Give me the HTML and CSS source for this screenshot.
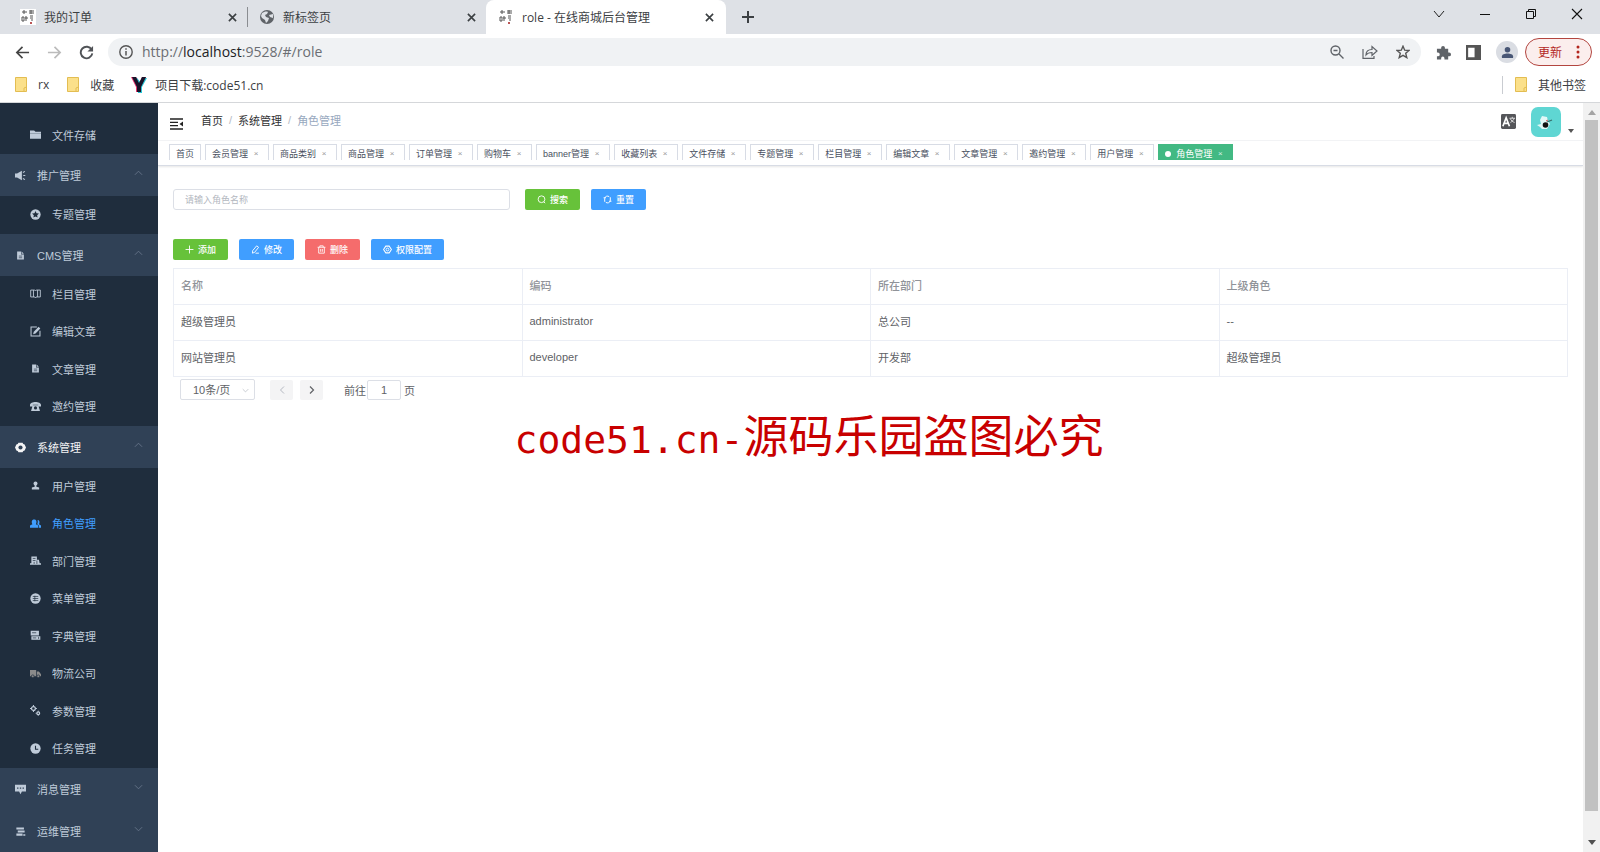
FILE: index.html
```html
<!DOCTYPE html>
<html lang="zh-CN">
<head>
<meta charset="utf-8">
<title>role - 在线商城后台管理</title>
<link rel="stylesheet" href="styles.css">
</head>
<body>
<svg class="sprite" aria-hidden="true">
  <symbol id="close" viewBox="0 0 10 10"><path d="M1 1l8 8M9 1L1 9" fill="none" stroke="currentColor" stroke-width="1.8"/></symbol>
  <symbol id="seal" viewBox="0 0 16 16"><path d="M2 3h5M4 1v4M9 2h5M11 1v4M9 4h5M2 8h2v4H2zM5 9h3M6 7v5M10 7h3M10 9h3M11 11h2" fill="none" stroke="#555" stroke-width="1"/><path d="M10 13h2v2h-2z" fill="#b55"/></symbol>
  <symbol id="bfolder" viewBox="0 0 12 15"><path d="M.5.5h11v14H.5z" fill="#fbe08a" stroke="#e3bd52"/><path d="M9 14v-3l2.5-1" fill="none" stroke="#e3bd52"/></symbol>
  <symbol id="up" viewBox="0 0 10 6"><path d="M1 5l4-4 4 4" fill="none" stroke="currentColor"/></symbol>
  <symbol id="down" viewBox="0 0 10 6"><path d="M1 1l4 4 4-4" fill="none" stroke="currentColor"/></symbol>
  <symbol id="file" viewBox="0 0 16 16"><path d="M2 1h7v5h5v9H2z" fill="currentColor"/><path d="M10 1l4 4h-4z" fill="currentColor"/><path d="M5 9h6M5 12h6" stroke="#2b3a4d" stroke-width="1.2"/></symbol>
</svg>

<header class="browser">
  <div class="tabstrip">
    <div class="btab"><svg class="fav seal"><use href="#seal"/></svg><span class="btitle">我的订单</span><button class="bclose" aria-label="关闭"><svg><use href="#close"/></svg></button></div>
    <div class="btab divided"><svg class="fav" viewBox="0 0 16 16"><circle cx="8" cy="8" r="7" fill="#5f6368"/><path d="M3 4c2-1 4-2 6-1l-1 2-2 1 1 2 3 1-1 3-2 2-1-3-3-2-1-2zM10 6l4-1v4l-3-1z" fill="#dee1e6"/></svg><span class="btitle">新标签页</span><button class="bclose" aria-label="关闭"><svg><use href="#close"/></svg></button></div>
    <div class="btab current"><svg class="fav"><use href="#seal"/></svg><span class="btitle">role - 在线商城后台管理</span><button class="bclose" aria-label="关闭"><svg><use href="#close"/></svg></button></div>
    <button class="newtab" aria-label="新标签页"><svg viewBox="0 0 12 12"><path d="M6 0v12M0 6h12" stroke="#3c4043" stroke-width="2"/></svg></button>
    <div class="wincontrols">
      <button aria-label="标签页"><svg viewBox="0 0 12 12"><path d="M1 3l5 6 5-6" fill="none" stroke="#222"/></svg></button>
      <button aria-label="最小化"><svg viewBox="0 0 12 12"><path d="M1 6.500h10" stroke="#111"/></svg></button>
      <button aria-label="还原"><svg viewBox="0 0 12 12"><path d="M1.500 3.500h7v7h-7zM3.500 3v-1.500h7v7H9" fill="none" stroke="#111"/></svg></button>
      <button aria-label="关闭窗口"><svg viewBox="0 0 12 12"><path d="M1 1l10 10M11 1L1 11" stroke="#111" stroke-width="1.100"/></svg></button>
    </div>
  </div>
  <div class="toolbar">
    <button class="nav" aria-label="后退"><svg viewBox="0 0 16 16"><path d="M15 8H2M8 2L2 8l6 6" fill="none" stroke="#444" stroke-width="1.800"/></svg></button>
    <button class="nav" aria-label="前进"><svg viewBox="0 0 16 16"><path d="M1 8h13M8 2l6 6-6 6" fill="none" stroke="#bbb" stroke-width="1.800"/></svg></button>
    <button class="nav" aria-label="刷新"><svg viewBox="0 0 16 16"><path d="M13.500 5A6.200 6.200 0 1 0 14.200 9" fill="none" stroke="#505357" stroke-width="2"/><path d="M15 1v6H9z" fill="#505357"/></svg></button>
    <div class="omnibox">
      <svg class="ic14" viewBox="0 0 14 14"><circle cx="7" cy="7" r="6.200" fill="none" stroke="#555" stroke-width="1.400"/><path d="M7 6v4.500M7 3.200v1.600" stroke="#555" stroke-width="1.500"/></svg>
      <span class="url">http://<b>localhost</b>:9528/#/role</span>
      <button aria-label="缩放"><svg viewBox="0 0 14 14"><circle cx="5.500" cy="5.500" r="4.500" fill="none" stroke="#5f6368" stroke-width="1.400"/><path d="M9 9l4.500 4.500M3.500 5.500h4" stroke="#5f6368" stroke-width="1.400"/></svg></button>
      <button aria-label="分享"><svg viewBox="0 0 16 14"><path d="M1 4v9.300h11V11M4 10c0-4 2.500-5.500 6-5.500V1.500L15 6l-5 4.500V7.500C7.500 7.500 5.500 8 4 10z" fill="none" stroke="#5f6368" stroke-width="1.200"/></svg></button>
      <button aria-label="收藏"><svg viewBox="0 0 14 14"><path d="M7 1.200l1.700 4 4.300.3-3.300 2.800 1.100 4.300L7 10.300l-3.800 2.300 1.100-4.300L1 5.500l4.300-.3z" fill="none" stroke="#555" stroke-width="1.400"/></svg></button>
    </div>
    <div class="tools">
      <button aria-label="扩展"><svg viewBox="0 0 16 16"><path d="M1 4h4.500V3a2 2 0 0 1 4 0v1H13v4h1a2 2 0 0 1 0 4h-1v3.500H9V14a1.700 1.700 0 0 0-3.500 0v1.500H1V12h1a2 2 0 0 0 0-4H1z" fill="#5f6368"/></svg></button>
      <button aria-label="侧边栏"><svg viewBox="0 0 14 14"><path d="M0 0h14v14H0zM2 2.500v9h6v-9z" fill="#555" fill-rule="evenodd"/></svg></button>
      <button class="profile" aria-label="用户"><svg viewBox="0 0 14 14"><circle cx="7" cy="4" r="3" fill="#485675"/><path d="M1 13v-2c0-2 3-3 6-3s6 1 6 3v2z" fill="#485675"/></svg></button>
    </div>
    <button class="update">更新<svg viewBox="0 0 4 14"><g fill="#b3261e"><circle cx="2" cy="2" r="1.500"/><circle cx="2" cy="7" r="1.500"/><circle cx="2" cy="12" r="1.500"/></g></svg></button>
  </div>
  <nav class="bookmarks">
    <a href="#"><svg class="bf"><use href="#bfolder"/></svg>rx</a>
    <a href="#"><svg class="bf"><use href="#bfolder"/></svg>收藏</a>
    <a class="site" href="#"><svg viewBox="0 0 16 16"><path d="M0 0h5l4 5 2-5h4l-5 10v5H5v-5z" fill="#e6366f"/><path d="M2 1h4l4 5 2-5h4l-5 9v6H7v-6z" fill="#28c8d8"/><path d="M1 0h4l3 6 3-6h4l-5 10v5H6v-5z" fill="#181329"/></svg>项目下载:code51.cn</a>
    <a class="others" href="#"><svg class="bf"><use href="#bfolder"/></svg>其他书签</a>
  </nav>
</header>

<div class="app">
  <aside class="sidebar">
    <ul class="sub cut">
      <li><a href="#"><svg viewBox="0 0 16 16"><path d="M0 2h6l2 2h8v2H0zM0 6.500h16V14H0z" fill="currentColor"/></svg>文件存储</a></li>
    </ul>
    <button class="group"><svg viewBox="0 0 16 16"><path d="M0 5h3l7-4v14l-7-4H0z" fill="currentColor"/><path d="M11.500 3.500l3-1.500M12 8h3M11.500 12.500l3 1.500" stroke="currentColor" stroke-width="1.600"/></svg><span>推广管理</span><svg class="arrow"><use href="#up"/></svg></button>
    <ul class="sub single">
      <li><a href="#"><svg viewBox="0 0 16 16"><circle cx="8" cy="8" r="7.500" fill="currentColor"/><path d="M8 3l1.500 3.200 3.500.4-2.600 2.400.7 3.500L8 10.800l-3.100 1.700.7-3.500L3 6.600l3.500-.4z" fill="#1f2d3d"/></svg>专题管理</a></li>
    </ul>
    <button class="group"><svg class="small"><use href="#file"/></svg><span>CMS管理</span><svg class="arrow"><use href="#up"/></svg></button>
    <ul class="sub">
      <li><a href="#"><svg viewBox="0 0 16 16"><path d="M1 3h6l1 1 1-1h6v10H9l-1 1.500L7 13H1zM5 3v10M11 3v10" fill="none" stroke="currentColor" stroke-width="1.300"/></svg>栏目管理</a></li>
      <li><a href="#"><svg viewBox="0 0 16 16"><path d="M10 1.500H1.500v13h13V7" fill="none" stroke="currentColor" stroke-width="1.500"/><path d="M12.500 1L15 3.500 8 11l-3.500 1L5.500 8.500z" fill="currentColor"/></svg>编辑文章</a></li>
      <li><a href="#"><svg class="small"><use href="#file"/></svg>文章管理</a></li>
      <li><a href="#"><svg viewBox="0 0 16 16"><path d="M0 6c0-6 16-6 16 0v2h-4V5.500H4V8H0zM4 6h8l2.500 8.500h-13z" fill="currentColor"/><circle cx="8" cy="10" r="2.300" fill="#1f2d3d"/></svg>邀约管理</a></li>
    </ul>
    <button class="group opened"><svg viewBox="0 0 16 16"><path d="M5 1h6l1 2 2 .5L16 8l-2 4.500-2 .5-1 2H5l-1-2-2-.5L0 8l2-4.500L4 3z" fill="currentColor"/><circle cx="8" cy="8" r="3" fill="#304156"/></svg><span>系统管理</span><svg class="arrow"><use href="#up"/></svg></button>
    <ul class="sub">
      <li><a href="#"><svg class="small" viewBox="0 0 16 16"><circle cx="8" cy="4.500" r="3.500" fill="currentColor"/><path d="M6.500 7h3v3l5 1.500V15h-13v-3.500l5-1.500z" fill="currentColor"/></svg>用户管理</a></li>
      <li><a class="active" href="#"><svg viewBox="0 0 16 16"><path d="M6 2c4 0 4 4 2.500 7L12 11v3H0v-3l3.500-2C2 6 2 2 6 2zM11 3c3 0 3.500 4 2 6l3 2v3h-3v-3l-2.500-2c1-2 1-4 .5-6z" fill="currentColor"/></svg>角色管理</a></li>
      <li><a href="#"><svg viewBox="0 0 16 16"><path d="M2 2h8v5h3l1 5h2v2H0v-2h2z" fill="currentColor"/><path d="M4 5h4M4 8h4M10 8v5M6 10v3" stroke="#1f2d3d"/></svg>部门管理</a></li>
      <li><a href="#"><svg viewBox="0 0 16 16"><circle cx="8" cy="8" r="7.500" fill="currentColor"/><path d="M4 5h8M4 8h8M4 11h8M7 4v8" stroke="#1f2d3d"/></svg>菜单管理</a></li>
      <li><a href="#"><svg viewBox="0 0 16 16"><path d="M1 1h12v7H1zM2 9h8v5H2zM10 9h5v5h-5z" fill="currentColor"/><path d="M3 4h6M4 11.500h5M12.500 10v3" stroke="#1f2d3d"/></svg>字典管理</a></li>
      <li><a href="#"><svg class="gray" viewBox="0 0 16 16"><path d="M0 3h9v9H0zM10 5h3l3 4v3h-6z" fill="currentColor"/><circle cx="4" cy="12" r="2" fill="currentColor" stroke="#1f2d3d"/><circle cx="12" cy="12" r="2" fill="currentColor" stroke="#1f2d3d"/></svg>物流公司</a></li>
      <li><a href="#"><svg viewBox="0 0 16 16"><circle cx="5" cy="5" r="2.800" fill="none" stroke="currentColor" stroke-width="1.800"/><path d="M5 0v2M5 8v2M0 5h2M8 5h2" stroke="currentColor" stroke-width="1.500"/><circle cx="12" cy="12" r="2" fill="none" stroke="currentColor" stroke-width="1.800"/><path d="M12 8v2M12 14v2M8 12h2" stroke="currentColor"/></svg>参数管理</a></li>
      <li><a href="#"><svg viewBox="0 0 16 16"><circle cx="8" cy="8" r="7.500" fill="currentColor"/><path d="M8 4v5h4" fill="none" stroke="#1f2d3d" stroke-width="1.600"/></svg>任务管理</a></li>
    </ul>
    <button class="group"><svg viewBox="0 0 16 16"><path d="M0 1h16v10h-6l-2 4-2-4H0z" fill="currentColor"/><path d="M3 6h2M7 6h2M11 6h2" stroke="#304156" stroke-width="2"/></svg><span>消息管理</span><svg class="arrow"><use href="#down"/></svg></button>
    <button class="group"><svg viewBox="0 0 16 16"><path d="M2 2h11v3H2zM4 6.500h10v3H4zM2 11h9v3H2zM12 12h3v2h-3z" fill="currentColor"/></svg><span>运维管理</span><svg class="arrow"><use href="#down"/></svg></button>
  </aside>

  <main class="main">
    <div class="navbar">
      <button class="fold" aria-label="折叠菜单"><svg viewBox="0 0 13 12"><path d="M0 1h13M0 4.300h8M0 7.700h8M0 11h13" stroke="#222" stroke-width="1.300"/><path d="M13 3.500v5L9.500 6z" fill="#222"/></svg></button>
      <nav class="crumbs"><a href="#">首页</a><i>/</i><a href="#">系统管理</a><i>/</i><span>角色管理</span></nav>
      <button class="lang" aria-label="语言"><svg viewBox="0 0 16 16"><rect width="16" height="16" rx="1.500" fill="#55565a"/><path d="M2 13L5.500 4 9 13M3.200 10h4.600" fill="none" stroke="#fff" stroke-width="1.800"/><path d="M9 4.500h6M12 3v1.500M10 9c2-1 3.500-2.500 4-4.500M10 5c.8 2 2.500 3.500 4.500 4" fill="none" stroke="#fff" stroke-width=".8"/></svg></button>
      <button class="user" aria-label="用户菜单"><svg class="avatar" viewBox="0 0 30 30"><rect width="30" height="30" rx="7" fill="#5fd6d3"/><path d="M11 9l5 1 1 4 2 3-3 5-5 0-2-2-3-2 4-1-1-4z" fill="#e2f8f7"/><path d="M16 15l5-2" stroke="#37706e" stroke-width="1.300"/><circle cx="14.500" cy="18" r="2.800" fill="#111"/><path d="M15 14l2-1" stroke="#c55"/></svg><svg class="caret" viewBox="0 0 6 4"><path d="M0 0h6L3 4z" fill="#555"/></svg></button>
    </div>
    <div class="tags">
      <div class="tagclip">
        <a href="#">首页</a>
        <a href="#">会员管理<i>×</i></a>
        <a href="#">商品类别<i>×</i></a>
        <a href="#">商品管理<i>×</i></a>
        <a href="#">订单管理<i>×</i></a>
        <a href="#">购物车<i>×</i></a>
        <a href="#">banner管理<i>×</i></a>
        <a href="#">收藏列表<i>×</i></a>
        <a href="#">文件存储<i>×</i></a>
        <a href="#">专题管理<i>×</i></a>
        <a href="#">栏目管理<i>×</i></a>
        <a href="#">编辑文章<i>×</i></a>
        <a href="#">文章管理<i>×</i></a>
        <a href="#">邀约管理<i>×</i></a>
        <a href="#">用户管理<i>×</i></a>
        <a class="on" href="#">角色管理<i>×</i></a>
      </div>
    </div>
    <section class="content">
      <form class="filters">
        <input class="search" type="text" placeholder="请输入角色名称" aria-label="角色名称">
        <button type="button" class="btn green"><svg viewBox="0 0 16 16"><circle cx="8" cy="7.500" r="6" fill="none" stroke="currentColor" stroke-width="1.600"/><path d="M12 12l2.500 2.500" stroke="currentColor" stroke-width="1.600"/></svg>搜索</button>
        <button type="button" class="btn blue"><svg viewBox="0 0 16 16"><path d="M3 12V6a5 5 0 0 1 8-3M1 5h4M13 4v6a5 5 0 0 1-8 3M15 11h-4" fill="none" stroke="currentColor" stroke-width="1.700"/></svg>重置</button>
      </form>
      <div class="actions">
        <button class="btn green"><svg viewBox="0 0 16 16"><path d="M8 1v14M1 8h14" stroke="currentColor" stroke-width="1.600"/></svg>添加</button>
        <button class="btn blue"><svg viewBox="0 0 16 16"><path d="M10 1.500l3.500 2.500-7 9-4 1.500.5-4.500zM8 14.500h6" fill="none" stroke="currentColor" stroke-width="1.600"/></svg>修改</button>
        <button class="btn red"><svg viewBox="0 0 16 16"><path d="M1 4h14M5 4V1.500h6V4M3 4v10.500h10V4M6.500 7v5M9.500 7v5" fill="none" stroke="currentColor" stroke-width="1.500"/></svg>删除</button>
        <button class="btn blue"><svg viewBox="0 0 16 16"><path d="M5 2h6l4 6-4 6H5L1 8z" fill="none" stroke="currentColor" stroke-width="1.800"/><circle cx="8" cy="8" r="2.500" fill="none" stroke="currentColor" stroke-width="1.600"/></svg>权限配置</button>
      </div>
      <table class="grid">
        <thead><tr><th>名称</th><th>编码</th><th>所在部门</th><th>上级角色</th></tr></thead>
        <tbody>
          <tr><td>超级管理员</td><td>administrator</td><td>总公司</td><td>--</td></tr>
          <tr><td>网站管理员</td><td>developer</td><td>开发部</td><td>超级管理员</td></tr>
        </tbody>
      </table>
      <div class="pager">
        <div class="sizes"><select aria-label="每页条数"><option>10条/页</option></select><svg><use href="#down"/></svg></div>
        <button class="page" aria-label="上一页" disabled><svg viewBox="0 0 6 8"><path d="M5 0.500L1.500 4 5 7.500" fill="none" stroke="currentColor"/></svg></button>
        <button class="page" aria-label="下一页"><svg viewBox="0 0 6 8"><path d="M1 0.500L4.500 4 1 7.500" fill="none" stroke="currentColor" stroke-width="1.200"/></svg></button>
        <label class="jump">前往<input type="text" value="1">页</label>
      </div>
    </section>
  </main>

  <div class="scrollbar" aria-hidden="true">
    <svg viewBox="0 0 8 5"><path d="M0 5h8L4 0z" fill="#a3a3a3"/></svg>
    <div class="thumb"></div>
    <svg viewBox="0 0 8 5"><path d="M0 0h8L4 5z" fill="#505050"/></svg>
  </div>
</div>
<div class="watermark"><span>code51.cn-</span>源码乐园盗图必究</div>
</body>
</html>
```

FILE: styles.css
```css
* { box-sizing: border-box; }
body {
  margin: 0;
  height: 100vh;
  display: flex;
  flex-direction: column;
  overflow: hidden;
  position: relative;
  background: #fff;
  font-family: "Liberation Sans", "Noto Sans CJK SC", sans-serif;
  font-size: 11px;
  color: #606266;
}
button { border: 0; background: none; padding: 0; font: inherit; color: inherit; display: flex; align-items: center; }
input, select { font: inherit; color: inherit; }
a { color: inherit; text-decoration: none; }
svg { display: block; flex: none; }
i { font-style: normal; }
.sprite { position: absolute; width: 0; height: 0; }

/* browser frame */
.browser {
  flex: none;
  font-family: "Open Sans", "Noto Sans CJK SC", sans-serif;
  font-size: 12px;
  color: #3c4043;
  border-bottom: 1px solid #d5d7da;
}
.tabstrip { display: flex; height: 34px; background: #dee1e6; }
.btab { display: flex; align-items: center; width: 239px; padding: 0 10px 0 20px; gap: 8px; }
.btab:first-child { width: 247px; }
.btab.divided { background: linear-gradient(#8a8d91, #8a8d91) left center / 1px 20px no-repeat; padding-left: 12px; }
.btab.current { width: 240px; padding: 0 12px; gap: 8px; background: #fff; border-radius: 8px 8px 0 0; }
.fav { width: 16px; height: 16px; }
.fav.seal { background: #fff; }
.btitle { flex: 1; white-space: nowrap; }
.bclose svg { width: 9px; height: 9px; }
.newtab { padding: 0 16px; }
.newtab svg { width: 12px; height: 12px; }
.wincontrols { display: flex; margin-left: auto; height: 28px; }
.wincontrols button { width: 46px; justify-content: center; }
.wincontrols svg { width: 12px; height: 12px; }
.toolbar { display: flex; align-items: center; height: 36px; padding: 0 8px 0 6px; }
.nav { width: 32px; justify-content: center; }
.nav svg { width: 15px; height: 15px; }
.omnibox { flex: 1; display: flex; align-items: center; height: 28px; margin-left: 6px; padding: 0 11px; border-radius: 14px; background: #f0f2f4; gap: 18px; }
.omnibox button svg { width: 14px; height: 14px; }
.omnibox button:nth-of-type(2) svg { width: 16px; }
.ic14 { width: 14px; height: 14px; }
.url { flex: 1; margin-left: -9px; padding-bottom: 2px; font-size: 14px; color: #6b6e73; }
.url b { font-weight: normal; color: #202124; }
.tools { display: flex; align-items: center; gap: 15px; padding: 0 7px 0 15px; }
.tools svg { width: 15px; height: 15px; }
.profile { width: 22px; height: 22px; border-radius: 50%; background: #dadde3; justify-content: center; }
.profile svg { width: 13px; height: 13px; }
.update { height: 28px; width: 67px; padding: 0 11px 0 12px; justify-content: space-between; border: 1px solid #b3453f; border-radius: 14px; background: #fbeeed; color: #b3261e; }
.update svg { width: 4px; height: 14px; }
.bookmarks { display: flex; align-items: center; height: 32px; padding: 0 14px 3px 15px; gap: 18px; }
.bookmarks a { display: flex; align-items: center; gap: 11px; }
.bf { width: 12px; height: 15px; }
.bookmarks .site { gap: 8px; margin-left: -1px; }
.site svg { width: 16px; height: 16px; }
.bookmarks .others { margin-left: auto; border-left: 1px solid #c9ccd1; padding-left: 12px; }

/* application */
.app { flex: 1; display: flex; min-height: 0; }
.sidebar { width: 158px; flex: none; overflow: hidden; background: #304156; color: #bfcbd9; }
.sub { list-style: none; margin: 0; padding: 0; background: #1f2d3d; }
.sub.cut { padding-top: 14px; }
.sub a { display: flex; align-items: center; gap: 11px; height: 37px; padding: 0 0 2px 30px; }
.sub li:nth-child(even) a, .sub.single a { height: 38px; }
.sub svg, .group svg { width: 11px; height: 11px; }
.sub .small, .group .small { padding: 1px; }
.sub .active { color: #409eff; }
.sub .gray { color: #8a8a8a; }
.group { width: 100%; height: 42px; padding: 0 15px; gap: 11px; }
.group span { flex: 1; text-align: left; }
.group.opened { color: #f4f4f5; }
.group .arrow { width: 9px; height: 6px; color: #66758a; margin-bottom: 4px; }

.main { flex: 1; min-width: 0; }
.navbar { display: flex; align-items: center; height: 38px; padding-left: 12px; border-bottom: 1px solid #f3f4f6; }
.fold { margin-top: 5px; }
.fold svg { width: 13px; height: 12px; }
.crumbs { display: flex; flex: 1; align-items: center; gap: 6px; margin-left: 18px; padding-bottom: 3px; color: #303133; }
.crumbs i { color: #b5bac4; }
.crumbs span { color: #97a8be; }
.lang svg { width: 15px; height: 15px; }
.user { margin: 0 9px 0 15px; gap: 7px; align-items: flex-end; }
.avatar { width: 30px; height: 30px; }
.caret { width: 6px; height: 4px; margin-bottom: 4px; }
.tags { height: 25px; padding: 3px 11px 0; border-bottom: 1px solid #d8dce5; box-shadow: 0 1px 2px rgba(0, 0, 0, .1); }
.tagclip { display: flex; gap: 4px; height: 16px; overflow: hidden; }
.tagclip a { display: flex; flex: none; height: 20px; line-height: 18px; padding: 0 6px; border: 1px solid #d8dce5; font-size: 9px; color: #495060; white-space: nowrap; }
.tagclip i { width: 14px; padding-left: 2px; text-align: center; font-size: 8px; color: #999; }
.tagclip .on { align-items: center; background: #42b983; border-color: #42b983; color: #fff; }
.tagclip .on i { color: #d5f1e4; }
.tagclip .on::before { content: ""; width: 6px; height: 6px; margin-right: 5px; border-radius: 50%; background: #fff; }

.content { padding: 23px 15px; }
.filters { display: flex; gap: 11px; margin-bottom: 29px; }
.search { width: 337px; height: 21px; margin-right: 4px; padding: 0 11px; border: 1px solid #dcdfe6; border-radius: 3px; font-size: 9px; }
.search::placeholder { color: #b3b7c0; }
.actions { display: flex; gap: 11px; margin-bottom: 8px; }
.btn { height: 21px; padding: 0 12px; gap: 4px; border-radius: 2px; font-size: 9px; font-weight: 500; color: #fff; }
.btn svg { width: 9px; height: 9px; }
.green { background: #67c23a; }
.blue { background: #409eff; }
.red { background: #f56c6c; }
.grid { width: 100%; table-layout: fixed; border-collapse: collapse; }
.grid th, .grid td { height: 36px; padding: 0 7px 3px; border: 1px solid #ebeef5; text-align: left; }
.grid th { font-weight: 500; color: #909399; }
.pager { display: flex; align-items: center; height: 21px; padding-left: 7px; margin-top: 2px; }
.sizes { position: relative; margin-right: 15px; }
.sizes select { width: 75px; height: 21px; padding: 0 12px; border: 1px solid #dcdfe6; border-radius: 2px; background: #fff; appearance: none; }
.sizes svg { position: absolute; right: 6px; top: 9px; width: 7px; height: 5px; color: #b3b7c0; }
.page { width: 23px; height: 20px; margin-right: 7px; justify-content: center; background: #f4f4f5; color: #606266; border-radius: 2px; }
.page:disabled { color: #b3b7c0; }
.page svg { width: 6px; height: 8px; }
.jump { display: flex; align-items: center; gap: 1px; margin-left: 14px; }
.jump input { width: 34px; height: 20px; padding: 0; margin-right: 2px; border: 1px solid #dcdfe6; border-radius: 2px; text-align: center; }

.scrollbar { width: 17px; flex: none; display: flex; flex-direction: column; align-items: center; padding: 7px 0; background: #f1f1f1; }
.scrollbar svg { width: 8px; height: 5px; }
.thumb { flex: 1; width: 13px; margin: 5px 0 29px; background: #c1c1c1; }

.watermark {
  position: absolute;
  left: 0;
  right: 0;
  top: 405px;
  padding-left: 18px;
  text-align: center;
  line-height: 66px;
  font-size: 45px;
  color: #c80000;
  pointer-events: none;
}
.watermark span { font-family: "DejaVu Sans Mono", monospace; font-size: 38px; }
```
